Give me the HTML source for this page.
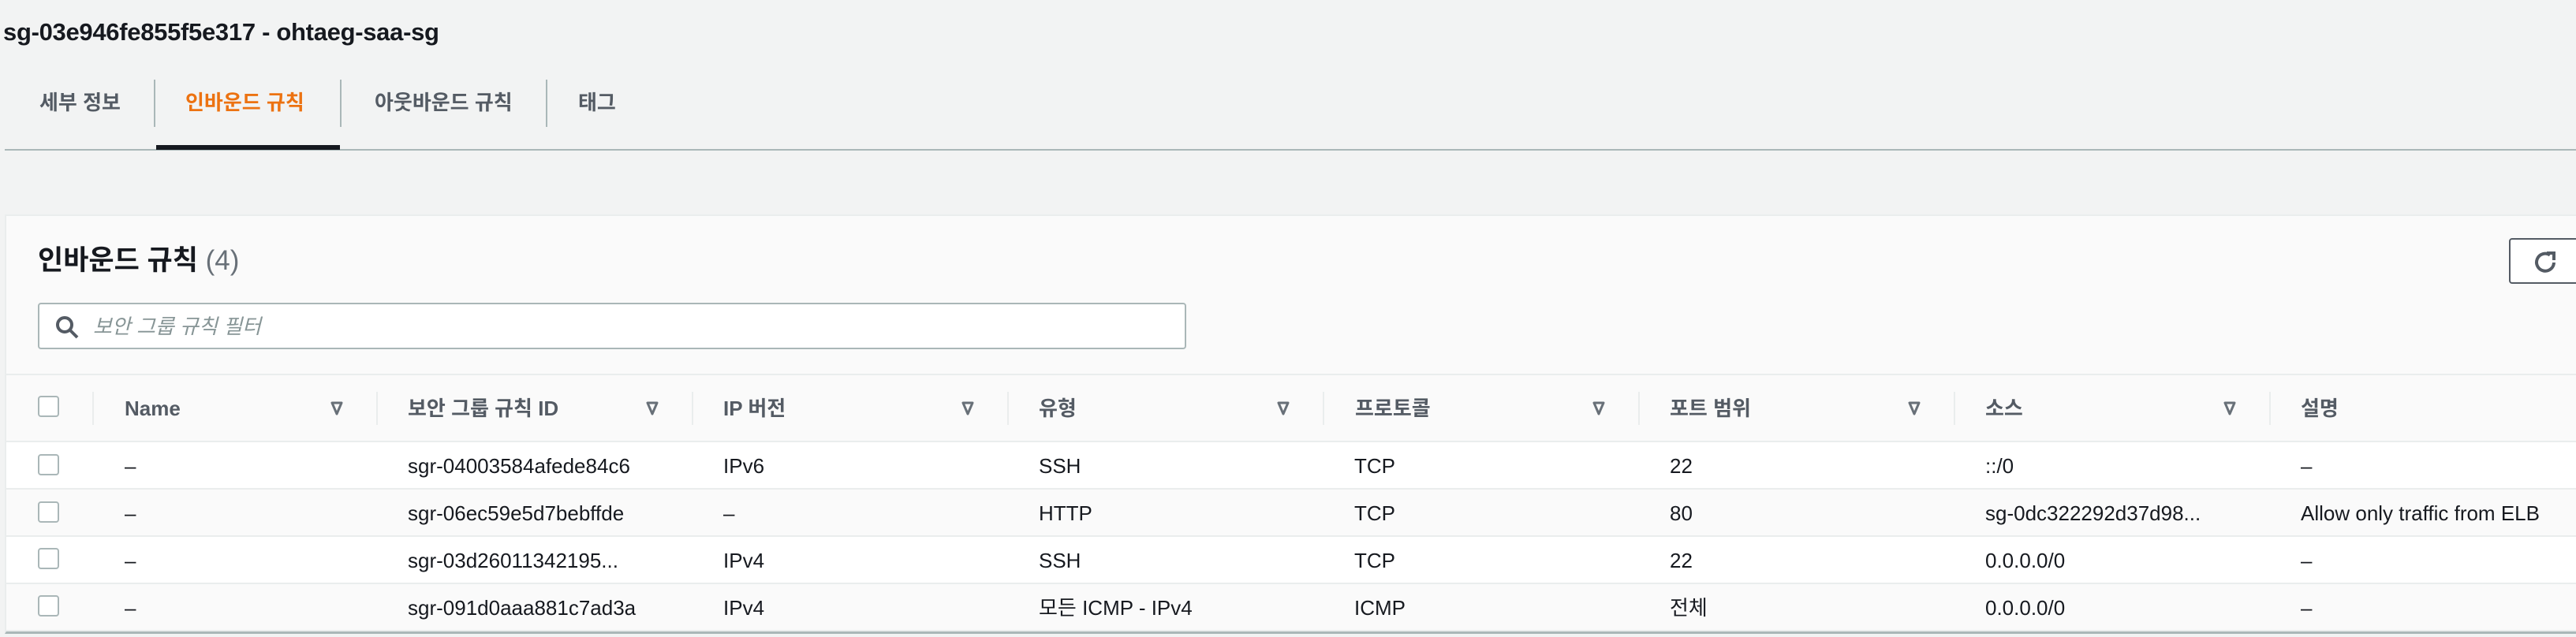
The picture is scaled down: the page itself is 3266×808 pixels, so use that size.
<!DOCTYPE html>
<html><head><meta charset="utf-8"><style>
*{margin:0;padding:0;box-sizing:border-box}
body{width:3266px;height:808px;background:#f2f3f3;position:relative;overflow:hidden;font-family:"Liberation Sans","Noto Sans CJK KR",sans-serif;color:#16191f}
.a{position:absolute;white-space:nowrap}
.title{left:4px;top:21px;font-size:31px;font-weight:bold;letter-spacing:-0.3px;line-height:40px}
.tab{top:112px;font-size:26px;font-weight:bold;color:#545b64;line-height:36px}
.vd{position:absolute;width:2px;background:#aab7b8;top:101px;height:60px}
.panel{position:absolute;left:6px;top:272px;width:3270px;height:532px;background:#fafafa;border-top:2px solid #eaeded;border-left:2px solid #eaeded;border-bottom:3px solid #aab7b8}
.h2{left:48px;top:309px;font-size:35px;font-weight:bold;line-height:44px}
.h2 span{font-weight:normal;color:#687078}
.search{position:absolute;left:48px;top:384px;width:1456px;height:59px;background:#fff;border:2px solid #aab7b8;border-radius:4px}
.ph{left:118px;top:398px;font-size:26px;font-style:italic;color:#879596;line-height:32px}
.row{position:absolute;left:8px;width:3260px;border-bottom:2px solid #eaeded}
.cb{position:absolute;left:48px;width:27px;height:27px;border:2px solid #aab7b8;border-radius:4px;background:#fff}
.th{top:500px;font-size:26px;font-weight:bold;color:#545b64;line-height:36px}
.td{font-size:26px;line-height:36px;color:#16191f}
.sep{position:absolute;top:497px;height:42px;width:2px;background:#eaeded}
.tri{position:absolute;top:509px}
</style></head><body>
<div class="a title">sg-03e946fe855f5e317 - ohtaeg-saa-sg</div>
<div class="a tab" style="left:50px">세부 정보</div>
<div class="a tab" style="left:235px;color:#ec7211">인바운드 규칙</div>
<div class="a tab" style="left:475px">아웃바운드 규칙</div>
<div class="a tab" style="left:733px">태그</div>
<div class="vd" style="left:195px"></div>
<div class="vd" style="left:431px"></div>
<div class="vd" style="left:692px"></div>
<div style="position:absolute;left:6px;top:189px;width:3260px;height:2px;background:#aab7b8"></div>
<div style="position:absolute;left:198px;top:184px;width:233px;height:6px;background:#16191f"></div>

<div class="panel"></div>
<div class="a h2">인바운드 규칙 <span>(4)</span></div>
<div style="position:absolute;left:3181px;top:302px;width:100px;height:58px;background:#fff;border:2px solid #545b64;border-radius:4px"></div>
<svg class="a" style="left:3208px;top:312px" width="40" height="40" viewBox="0 0 40 40"><path d="M30 21 A11 11 0 1 1 25 11.5" fill="none" stroke="#545b64" stroke-width="4"/><path d="M21 9 L30 9 L30 18" fill="none" stroke="#545b64" stroke-width="4"/></svg>
<div class="search"></div>
<svg class="a" style="left:68px;top:398px" width="36" height="36" viewBox="0 0 36 36"><circle cx="14" cy="14" r="9" fill="none" stroke="#545b64" stroke-width="4"/><path d="M21 21 L30 30" stroke="#545b64" stroke-width="4"/></svg>
<div class="a ph">보안 그룹 규칙 필터</div>

<div class="row" style="top:474px;height:87px;background:#fafafa;border-top:2px solid #eaeded"></div>
<div class="row" style="top:561px;height:60px;background:#fff"></div>
<div class="row" style="top:621px;height:60px;background:#fafafa"></div>
<div class="row" style="top:681px;height:60px;background:#fff"></div>
<div class="row" style="top:741px;height:60px;background:#fafafa"></div>

<div class="cb" style="top:502px"></div>
<div class="cb" style="top:576px"></div>
<div class="cb" style="top:636px"></div>
<div class="cb" style="top:695px"></div>
<div class="cb" style="top:755px"></div>

<div class="sep" style="left:117px"></div>
<div class="sep" style="left:477px"></div>
<div class="sep" style="left:877px"></div>
<div class="sep" style="left:1277px"></div>
<div class="sep" style="left:1677px"></div>
<div class="sep" style="left:2077px"></div>
<div class="sep" style="left:2477px"></div>
<div class="sep" style="left:2877px"></div>

<svg width="0" height="0" style="position:absolute"><defs><path id="t" d="M2 2 L14 2 L8 16 Z" fill="none" stroke="#687078" stroke-width="3" stroke-linejoin="round"/></defs></svg>
<svg class="tri" style="left:419px" width="16" height="18"><use href="#t"/></svg>
<svg class="tri" style="left:819px" width="16" height="18"><use href="#t"/></svg>
<svg class="tri" style="left:1219px" width="16" height="18"><use href="#t"/></svg>
<svg class="tri" style="left:1619px" width="16" height="18"><use href="#t"/></svg>
<svg class="tri" style="left:2019px" width="16" height="18"><use href="#t"/></svg>
<svg class="tri" style="left:2419px" width="16" height="18"><use href="#t"/></svg>
<svg class="tri" style="left:2819px" width="16" height="18"><use href="#t"/></svg>

<div class="a th" style="left:158px">Name</div>
<div class="a th" style="left:517px">보안 그룹 규칙 ID</div>
<div class="a th" style="left:917px">IP 버전</div>
<div class="a th" style="left:1317px">유형</div>
<div class="a th" style="left:1718px">프로토콜</div>
<div class="a th" style="left:2117px">포트 범위</div>
<div class="a th" style="left:2517px">소스</div>
<div class="a th" style="left:2917px">설명</div>

<div class="a td" style="top:573px;left:158px">–</div>
<div class="a td" style="top:573px;left:517px">sgr-04003584afede84c6</div>
<div class="a td" style="top:573px;left:917px">IPv6</div>
<div class="a td" style="top:573px;left:1317px">SSH</div>
<div class="a td" style="top:573px;left:1717px">TCP</div>
<div class="a td" style="top:573px;left:2117px">22</div>
<div class="a td" style="top:573px;left:2517px">::/0</div>
<div class="a td" style="top:573px;left:2917px">–</div>

<div class="a td" style="top:633px;left:158px">–</div>
<div class="a td" style="top:633px;left:517px">sgr-06ec59e5d7bebffde</div>
<div class="a td" style="top:633px;left:917px">–</div>
<div class="a td" style="top:633px;left:1317px">HTTP</div>
<div class="a td" style="top:633px;left:1717px">TCP</div>
<div class="a td" style="top:633px;left:2117px">80</div>
<div class="a td" style="top:633px;left:2517px">sg-0dc322292d37d98...</div>
<div class="a td" style="top:633px;left:2917px">Allow only traffic from ELB</div>

<div class="a td" style="top:693px;left:158px">–</div>
<div class="a td" style="top:693px;left:517px">sgr-03d26011342195...</div>
<div class="a td" style="top:693px;left:917px">IPv4</div>
<div class="a td" style="top:693px;left:1317px">SSH</div>
<div class="a td" style="top:693px;left:1717px">TCP</div>
<div class="a td" style="top:693px;left:2117px">22</div>
<div class="a td" style="top:693px;left:2517px">0.0.0.0/0</div>
<div class="a td" style="top:693px;left:2917px">–</div>

<div class="a td" style="top:753px;left:158px">–</div>
<div class="a td" style="top:753px;left:517px">sgr-091d0aaa881c7ad3a</div>
<div class="a td" style="top:753px;left:917px">IPv4</div>
<div class="a td" style="top:753px;left:1317px">모든 ICMP - IPv4</div>
<div class="a td" style="top:753px;left:1717px">ICMP</div>
<div class="a td" style="top:753px;left:2117px">전체</div>
<div class="a td" style="top:753px;left:2517px">0.0.0.0/0</div>
<div class="a td" style="top:753px;left:2917px">–</div>
</body></html>
